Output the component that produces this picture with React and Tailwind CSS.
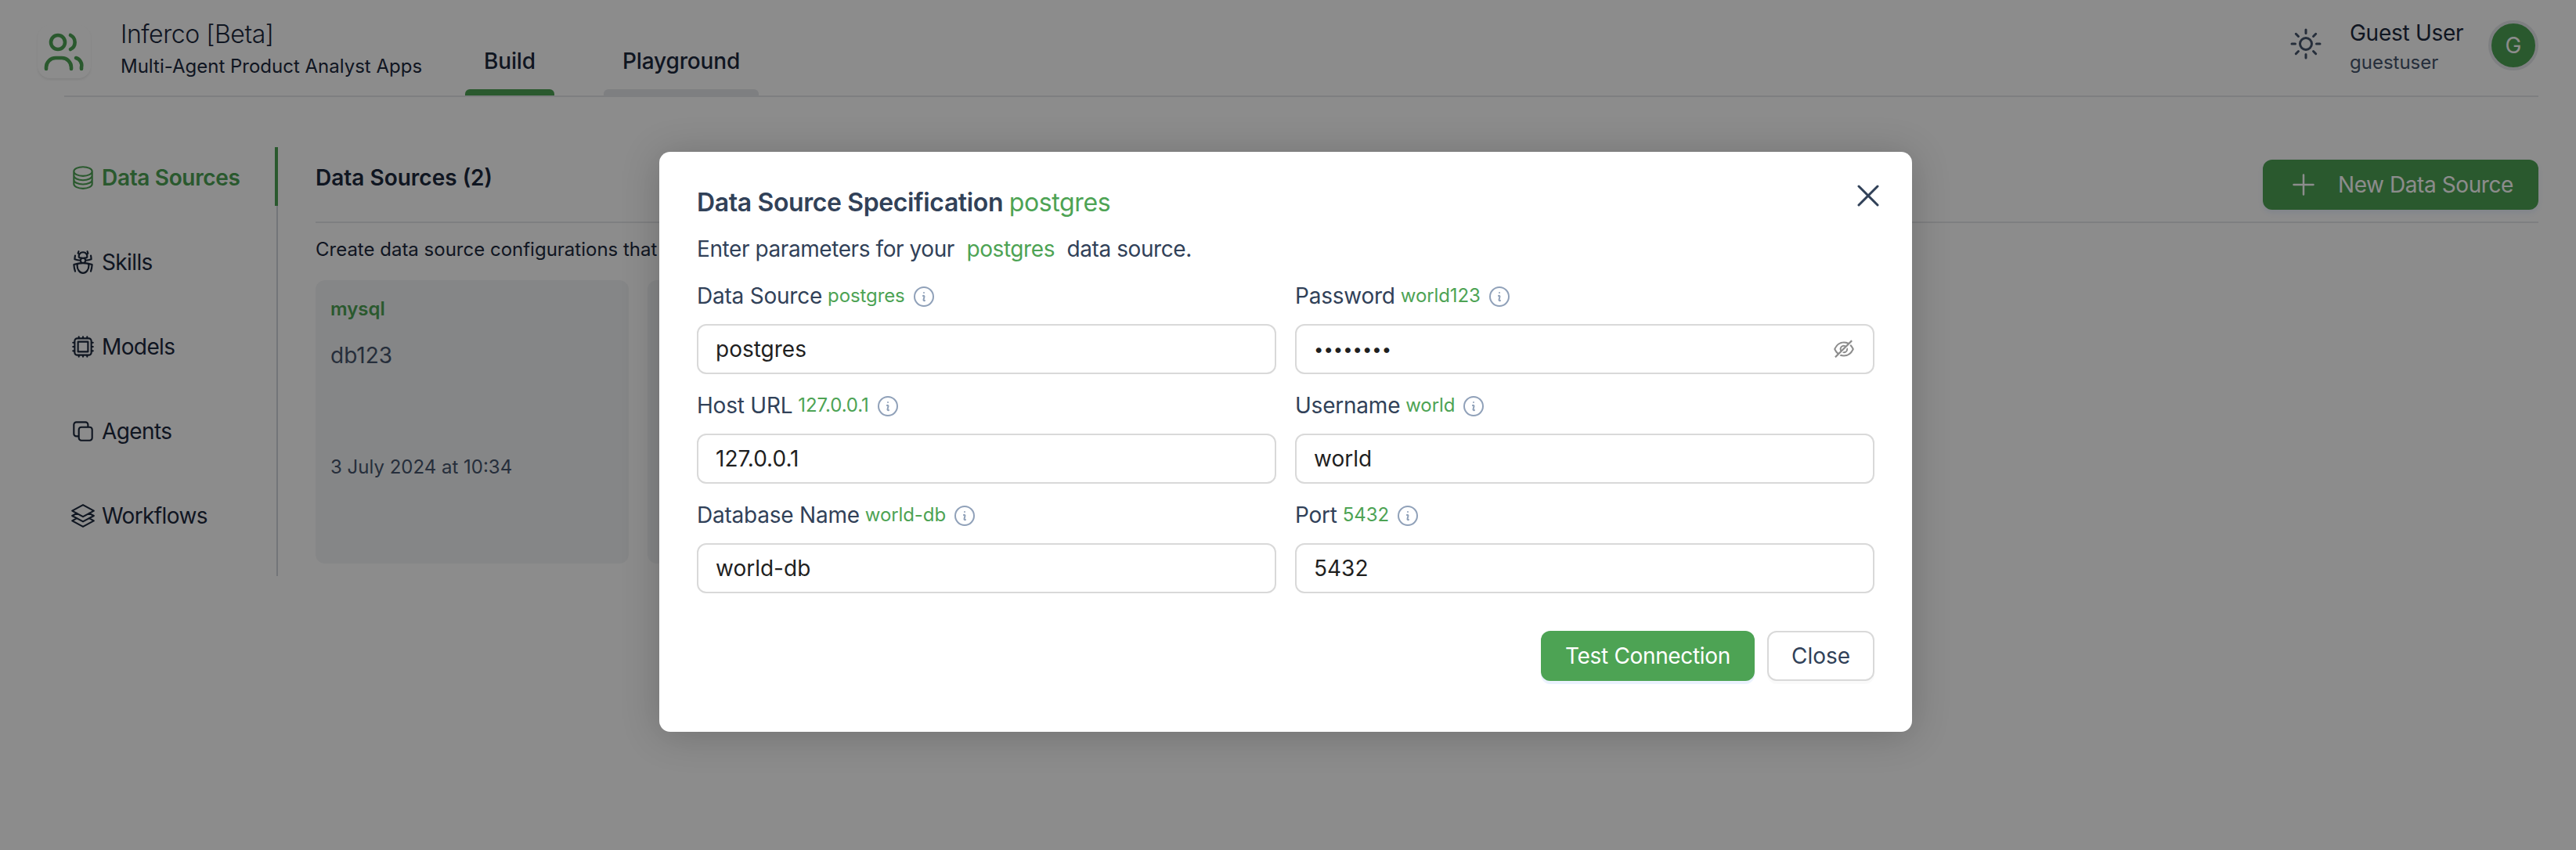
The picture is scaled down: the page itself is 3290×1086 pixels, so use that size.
import React from "react";
import { HiOutlineCircleStack, HiOutlineBugAnt, HiOutlineCpuChip, HiOutlineSquare2Stack, HiOutlineSquare3Stack3D, HiOutlineSun, HiOutlinePlus, HiOutlineXMark, HiOutlineInformationCircle } from "react-icons/hi2";
import { AiOutlineEyeInvisible } from "react-icons/ai";

const nav = [
  { label: "Data Sources", Icon: HiOutlineCircleStack, active: true },
  { label: "Skills", Icon: HiOutlineBugAnt },
  { label: "Models", Icon: HiOutlineCpuChip },
  { label: "Agents", Icon: HiOutlineSquare2Stack },
  { label: "Workflows", Icon: HiOutlineSquare3Stack3D },
];

const fields = [
  { label: "Data Source", hint: "postgres", value: "postgres" },
  { label: "Password", hint: "world123", value: "world123", secret: true },
  { label: "Host URL", hint: "127.0.0.1", value: "127.0.0.1" },
  { label: "Username", hint: "world", value: "world" },
  { label: "Database Name", hint: "world-db", value: "world-db" },
  { label: "Port", hint: "5432", value: "5432" },
];

function LogoIcon() {
  return (
    <svg viewBox="0 0 68 68" className="h-[68px] w-[68px] text-[#4da354]" fill="none" stroke="currentColor" strokeWidth="4.6" strokeLinecap="round">
      <circle cx="26" cy="22" r="9" />
      <path d="M42 13a10 10 0 0 1 0 18" />
      <path d="M11 56v-2a12 12 0 0 1 12-12h8a12 12 0 0 1 12 12v2" />
      <path d="M49 42a10 10 0 0 1 7 12v2" />
    </svg>
  );
}

function Field({ label, hint, value, secret }) {
  return (
    <div className="h-[140px]">
      <div className="flex h-[64px] items-center pb-[9px]">
        <span className="text-[28px] leading-[40px] tracking-[-0.008em] text-slate-700">{label}</span>
        <span className="ml-[7px] text-[24px] leading-[40px] tracking-[-0.004em] text-[#4da354]">{hint}</span>
        <HiOutlineInformationCircle className="ml-[8px] mt-[2px] h-[32px] w-[32px] text-slate-400" />
      </div>
      <div className="flex h-[64px] items-center rounded-[12px] border-2 border-[#d9d9d9] bg-white px-[22px]">
        <input
          readOnly
          type={secret ? "password" : "text"}
          value={value}
          className={`min-w-0 flex-1 bg-transparent text-[#1f1f1f] outline-none ${secret ? "text-[22px]" : "text-[28px]"}`}
        />
        {secret && <AiOutlineEyeInvisible className="h-[30px] w-[30px] text-[#8c8c8c]" />}
      </div>
    </div>
  );
}

export default function App() {
  return (
    <div className="relative h-[1086px] w-full overflow-hidden bg-white font-['Inter',sans-serif]">
      <header className="flex items-start px-12 pt-8">
        <div className="z-10 h-[68px] w-[68px] rounded-[16px] bg-white shadow-[0_2px_3px_rgba(0,0,0,0.08)]">
          <LogoIcon />
        </div>
        <div className="ml-[-34px] flex h-[92px] flex-1 items-start justify-between border-b-2 border-gray-200 pl-[72px]">
          <div className="flex items-start">
            <div className="-mt-[10px] w-[440px]">
              <div className="text-[32px] leading-[44px] font-light tracking-[-0.014em] text-slate-800">Inferco [Beta]</div>
              <div className="mt-[1px] text-[24px] leading-[36px] text-slate-800">Multi-Agent Product Analyst Apps</div>
            </div>
            <div className="flex h-[90px] gap-[63px]">
              <div className="flex flex-col justify-between">
                <div className="mt-[26px] px-[24px] text-[28px] leading-[40px] font-medium tracking-[-0.005em] text-slate-800">Build</div>
                <div className="h-[8px] rounded-t-[6px] bg-[#4da354]" />
              </div>
              <div className="flex flex-col justify-between">
                <div className="mt-[26px] px-[24px] text-[28px] leading-[40px] font-medium tracking-[-0.005em] text-slate-800">Playground</div>
                <div className="h-[8px] rounded-t-[6px] bg-gray-200" />
              </div>
            </div>
          </div>
          <div className="flex items-start">
            <HiOutlineSun className="h-[48px] w-[48px] text-slate-600" />
            <div className="-mt-[10px] ml-[32px] w-[145px] whitespace-nowrap">
              <div className="text-[28px] leading-[40px] tracking-[-0.01em] text-slate-800">Guest User</div>
              <div className="text-[24px] leading-[36px] text-slate-600">guestuser</div>
            </div>
            <div className="-mt-[6px] ml-[32px] flex h-[64px] w-[64px] items-center justify-center rounded-full border-[4px] border-gray-200 bg-[#4da354] text-[28px] text-white">G</div>
          </div>
        </div>
      </header>

      <div className="flex pt-[64px] pr-12 pl-[48px]">
        <aside className="relative h-[548px] w-[307px] border-r-2 border-gray-300 pt-[12px]">
          <div className="absolute top-0 right-[-2px] h-[75px] w-[4px] bg-[#4da354]" />
          {nav.map(({ label, Icon, active }) => (
            <div key={label} className={`mb-[54px] flex h-[54px] items-center pl-[41px] text-[28px] ${active ? "font-semibold tracking-[-0.012em] text-[#4da354]" : "tracking-[-0.022em] text-slate-800"}`}>
              <Icon className="mr-[7px] h-[34px] w-[34px] shrink-0" />
              {label}
            </div>
          ))}
        </aside>
        <main className="flex-1 pl-[48px]">
          <div className="flex h-[97px] items-start justify-between border-b-2 border-gray-200">
            <div className="mt-[19px] text-[28px] leading-[40px] font-semibold text-slate-800">Data Sources (2)</div>
            <button className="mt-[16px] flex h-[64px] w-[352px] items-center rounded-[12px] bg-[#4da354] pl-[32px] text-[28px] tracking-[-0.015em] text-white shadow-[0_4px_6px_rgba(59,130,246,0.1)]">
              <HiOutlinePlus className="mr-[24px] h-[40px] w-[40px]" />
              New Data Source
            </button>
          </div>
          <p className="mt-[16px] text-[24px] leading-[36px] text-slate-800">Create data source configurations that</p>
          <div className="mt-[21px] flex gap-[24px]">
            <div className="h-[362px] w-[400px] rounded-[12px] bg-gray-100 p-[19px] pt-[21px]">
              <div className="text-[24px] leading-[32px] font-semibold text-[#4da354]">mysql</div>
              <div className="mt-[23px] text-[28px] leading-[40px] text-slate-600">db123</div>
              <div className="mt-[105px] text-[24px] leading-[36px] text-slate-600">3 July 2024 at 10:34</div>
            </div>
            <div className="h-[362px] w-[400px] rounded-[12px] bg-gray-100" />
          </div>
        </main>
      </div>

      <div className="absolute inset-0 z-20 flex items-start justify-center bg-black/45 pt-[194px] pr-[6px]">
        <div className="relative h-[741px] w-[1600px] rounded-[14px] bg-white px-12 pt-[41px] shadow-[0_4px_50px_rgba(0,0,0,0.2)]">
          <button className="absolute top-[32px] right-[32px] text-slate-700">
            <HiOutlineXMark className="h-[48px] w-[48px]" />
          </button>
          <h2 className="text-[32px] leading-[48px] font-semibold tracking-[-0.012em] text-slate-700">
            Data Source Specification <span className="font-normal text-[#4da354]">postgres</span>
          </h2>
          <p className="mt-[15px] text-[28px] leading-[40px] tracking-[-0.015em] text-slate-700">
            Enter parameters for your <span className="mx-[8px] text-[#4da354]">postgres</span> data source.
          </p>
          <div className="mt-[12px] grid grid-cols-2 gap-x-[24px]">
            {fields.map((f) => <Field key={f.label} {...f} />)}
          </div>
          <div className="mt-[36px] flex justify-end gap-[16px]">
            <button className="h-[64px] w-[273px] rounded-[12px] bg-[#4da354] text-[28px] tracking-[-0.012em] text-white shadow-[0_4px_0_rgba(59,130,246,0.1)]">Test Connection</button>
            <button className="h-[64px] w-[137px] rounded-[12px] border-2 border-[#d9d9d9] text-[28px] text-slate-700 shadow-[0_4px_0_rgba(0,0,0,0.02)]">Close</button>
          </div>
        </div>
      </div>
    </div>
  );
}
